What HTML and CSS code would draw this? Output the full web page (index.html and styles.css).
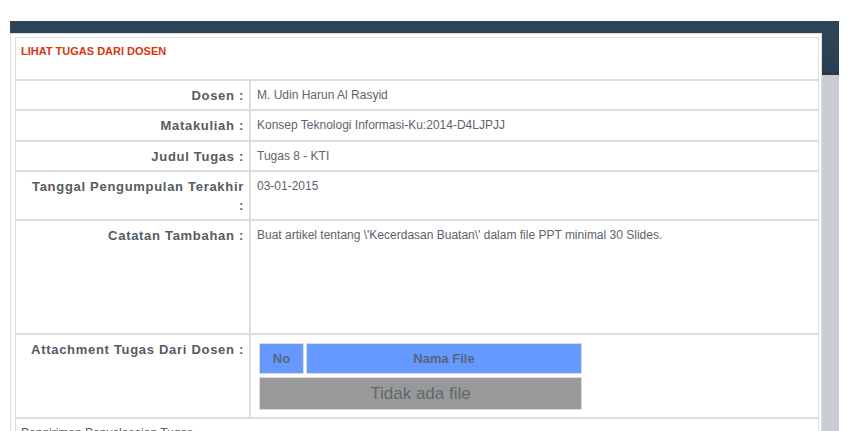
FILE: index.html
```html
<!DOCTYPE html>
<html>
<head>
<meta charset="utf-8">
<link rel="stylesheet" href="styles.css">
</head>
<body>
<div class="frame">
  <div class="topbar"></div>
  <div class="main">
    <div class="panel">
      <table class="detail">
        <colgroup>
          <col class="col-label">
          <col class="col-value">
        </colgroup>
        <tr>
          <td class="title" colspan="2">LIHAT TUGAS DARI DOSEN</td>
        </tr>
        <tr>
          <td class="label">Dosen :</td>
          <td class="value">M. Udin Harun Al Rasyid</td>
        </tr>
        <tr class="tall">
          <td class="label">Matakuliah :</td>
          <td class="value">Konsep Teknologi Informasi-Ku:2014-D4LJPJJ</td>
        </tr>
        <tr>
          <td class="label">Judul Tugas :</td>
          <td class="value">Tugas 8 - KTI</td>
        </tr>
        <tr>
          <td class="label">Tanggal Pengumpulan Terakhir :</td>
          <td class="value">03-01-2015</td>
        </tr>
        <tr>
          <td class="label">Catatan Tambahan :</td>
          <td class="value"><div class="note">Buat artikel tentang \'Kecerdasan Buatan\' dalam file PPT minimal 30 Slides.</div></td>
        </tr>
        <tr>
          <td class="label">Attachment Tugas Dari Dosen :</td>
          <td class="value attach">
            <table class="files">
              <tr>
                <th class="no">No</th>
                <th class="name">Nama File</th>
              </tr>
              <tr>
                <td class="empty" colspan="2">Tidak ada file</td>
              </tr>
            </table>
          </td>
        </tr>
        <tr>
          <td class="section" colspan="2">Pengiriman Penyelesaian Tugas</td>
        </tr>
      </table>
    </div>
    <div class="side"></div>
  </div>
</div>
</body>
</html>
```

FILE: styles.css
```css
html, body {
  margin: 0;
  padding: 0;
  background: #ffffff;
  font-family: "Liberation Sans", Arial, sans-serif;
}

.frame {
  margin: 21px 0 0 10px;
  width: 829px;
}

.topbar {
  height: 12px;
  background: #2e4558;
}

.main {
  display: flex;
  align-items: stretch;
}

.panel {
  width: 812px;
  box-sizing: border-box;
  border: 1px solid #dddddd;
  border-bottom: none;
  padding: 3px 2px 3px 4px;
  background: #fff;
}

.side {
  width: 17px;
  min-height: 400px;
  background: linear-gradient(to bottom, #2e4558 0, #2a3f51 36px, #253949 42px, #c9cdd1 42px, #c9cdd1 100%);
}

.detail {
  width: 804px;
  border-collapse: separate;
  border-spacing: 0;
  table-layout: fixed;
}

.col-label {
  width: 235px;
}

.detail > tbody > tr > td {
  border: 1px solid #dddddd;
  vertical-align: top;
  line-height: 19px;
}

.title {
  color: #d2380b;
  font-weight: bold;
  font-size: 11px;
  padding: 4px 5px 18px 5px;
}

.label {
  text-align: right;
  font-weight: bold;
  font-size: 13px;
  letter-spacing: 0.7px;
  color: #565b62;
  padding: 5px 5px 4px 14px;
}

.value {
  font-size: 12px;
  color: #5d646c;
  padding: 5px 6px 4px 6px;
}

.detail > tbody > tr.tall > td {
  padding-bottom: 5px;
}

.note {
  height: 103px;
}

.value.attach {
  padding: 5px 4px 4px 6px;
}

.files {
  width: 327px;
  border-collapse: separate;
  border-spacing: 2px 3px;
}

.files th {
  background: #6699ff;
  border: 1px solid #dddddd;
  color: #59667a;
  font-size: 13px;
  font-weight: bold;
  line-height: 19px;
  padding: 5px 4px;
  text-align: center;
}

.files th.no {
  width: 35px;
}

.files td.empty {
  background: #999999;
  border: 1px solid #dddddd;
  color: #5e6a70;
  font-size: 17px;
  line-height: 19px;
  padding: 6px 4px;
  text-align: center;
}

.section {
  font-size: 12px;
  color: #555a61;
  padding: 5px 5px 4px 5px;
}
```
